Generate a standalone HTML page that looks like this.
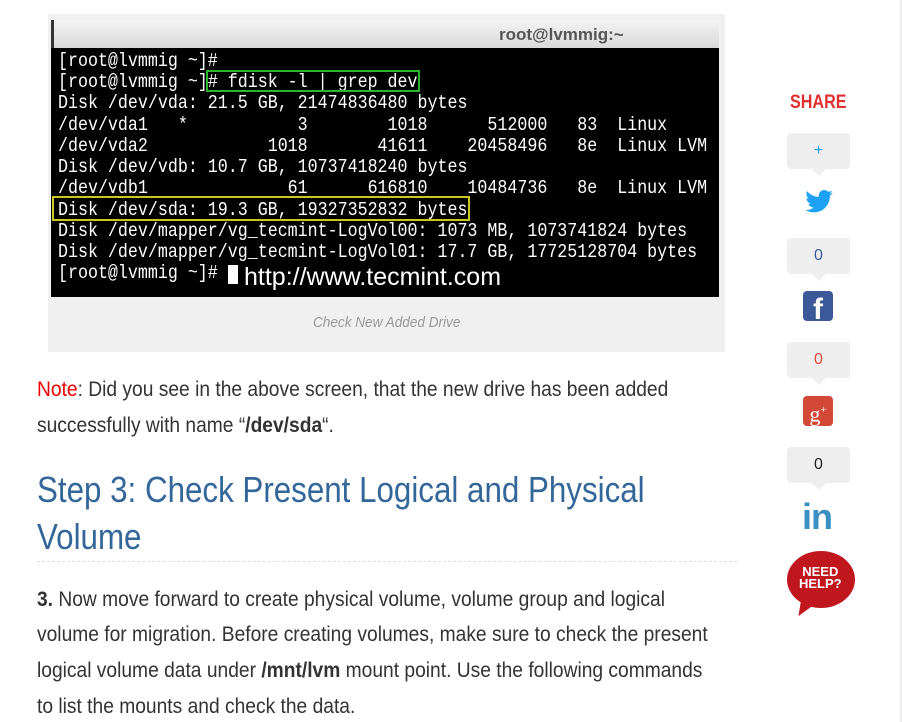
<!DOCTYPE html>
<html><head><meta charset="utf-8"><style>
body{margin:0;width:902px;height:722px;background:#fff;position:relative;overflow:hidden;font-family:"Liberation Sans",sans-serif}
.ab{position:absolute;white-space:nowrap}
.fig{position:absolute;left:48px;top:14px;width:677px;height:338px;background:#f0f0f0}
.term{position:absolute;left:51px;top:20px;width:668px;height:277px;background:#000}
.tbar{position:absolute;left:51px;top:20px;width:668px;height:28px;background:linear-gradient(#f3f3f3,#d9d9d9);border-left:3px solid #333;box-sizing:border-box}
.tl{position:absolute;left:58px;font-family:"Liberation Mono",monospace;font-size:16.65px;color:#fff;white-space:pre;transform:scaleY(1.15);transform-origin:left top}
.p{font-size:21px;color:#333;transform:scaleX(.915);transform-origin:left top}
.h{font-size:36px;color:#336699;transform:scaleX(.87);transform-origin:left top}
.box{position:absolute;background:#eee;border-radius:4px;width:63px;height:36px;left:787px;text-align:center;font-size:16px;line-height:36px}
.box:after{content:"";position:absolute;left:25px;bottom:-7px;border:7px solid transparent;border-top-color:#eee;border-bottom:0}
</style></head><body>
<div class="fig"></div>
<div class="term"></div>
<div class="tbar"></div>
<div class="ab" style="left:499px;top:25px;font-weight:bold;color:#555;font-size:17px">root@lvmmig:~</div>
<div class="tl" style="top:50px">[root@lvmmig ~]#</div>
<div class="tl" style="top:71px">[root@lvmmig ~]# fdisk -l | grep dev</div>
<div class="tl" style="top:92px">Disk /dev/vda: 21.5 GB, 21474836480 bytes</div>
<div class="tl" style="top:114px">/dev/vda1   *           3        1018      512000   83  Linux</div>
<div class="tl" style="top:135px">/dev/vda2            1018       41611    20458496   8e  Linux LVM</div>
<div class="tl" style="top:156px">Disk /dev/vdb: 10.7 GB, 10737418240 bytes</div>
<div class="tl" style="top:177px">/dev/vdb1              61      616810    10484736   8e  Linux LVM</div>
<div class="tl" style="top:199px">Disk /dev/sda: 19.3 GB, 19327352832 bytes</div>
<div class="tl" style="top:220px">Disk /dev/mapper/vg_tecmint-LogVol00: 1073 MB, 1073741824 bytes</div>
<div class="tl" style="top:241px">Disk /dev/mapper/vg_tecmint-LogVol01: 17.7 GB, 17725128704 bytes</div>
<div class="tl" style="top:262px">[root@lvmmig ~]#</div>
<div class="ab" style="left:228px;top:265px;width:10px;height:19px;background:#fff"></div>
<div class="ab" style="left:244px;top:263px;color:#fff;font-size:25px">http://www.tecmint.com</div>
<div class="ab" style="left:206px;top:70px;width:214px;height:22px;border:2px solid #2db52d;box-sizing:border-box"></div>
<div class="ab" style="left:52px;top:196px;width:418px;height:25px;border:2px solid #c8c81e;box-sizing:border-box"></div>
<div class="ab" style="left:313px;top:314px;color:#999;font-size:15px;font-style:italic;transform:scaleX(.905);transform-origin:left top">Check New Added Drive</div>

<div class="ab p" style="left:37px;top:378px"><span style="color:#e00">Note</span>: Did you see in the above screen, that the new drive has been added</div>
<div class="ab p" style="left:37px;top:414px">successfully with name “<b>/dev/sda</b>“.</div>
<div class="ab h" style="left:37px;top:469px">Step 3: Check Present Logical and Physical</div>
<div class="ab h" style="left:37px;top:516px">Volume</div>
<div class="ab" style="left:37px;top:561px;width:700px;border-top:1px dashed #ddd"></div>
<div class="ab p" style="left:37px;top:588px"><b>3.</b> Now move forward to create physical volume, volume group and logical</div>
<div class="ab p" style="left:37px;top:623px">volume for migration. Before creating volumes, make sure to check the present</div>
<div class="ab p" style="left:37px;top:659px">logical volume data under <b>/mnt/lvm</b> mount point. Use the following commands</div>
<div class="ab p" style="left:37px;top:695px">to list the mounts and check the data.</div>

<div class="ab" style="left:900px;top:0;width:2px;height:722px;background:#eee"></div>
<div class="ab" style="left:790px;top:92px;color:#e03030;font-weight:bold;font-size:19px;transform:scaleX(.85);transform-origin:left top">SHARE</div>
<div class="box" style="top:133px;color:#1da1f2">+</div>
<svg class="ab" style="left:803px;top:187px" width="32" height="30" viewBox="0 0 24 24"><path fill="#1da1f2" d="M23 4.6a9 9 0 0 1-2.6.7 4.6 4.6 0 0 0 2-2.5 9 9 0 0 1-2.9 1.1A4.5 4.5 0 0 0 11.8 8 12.8 12.8 0 0 1 2.5 3.3a4.5 4.5 0 0 0 1.4 6 4.5 4.5 0 0 1-2-.6 4.5 4.5 0 0 0 3.6 4.5 4.5 4.5 0 0 1-2 .1 4.5 4.5 0 0 0 4.2 3.1A9 9 0 0 1 1 18.3 12.8 12.8 0 0 0 7.9 20.3c8.3 0 12.8-6.9 12.8-12.8v-.6A9 9 0 0 0 23 4.6z"/></svg>
<div class="box" style="top:238px;color:#3b5998">0</div>
<div class="ab" style="left:803px;top:291px;width:30px;height:30px;background:#3b5998;border-radius:4px;overflow:hidden"><span style="position:absolute;left:10px;top:2px;color:#fff;font-weight:bold;font-size:30px">f</span></div>
<div class="box" style="top:342px;color:#dd4b39">0</div>
<div class="ab" style="left:803px;top:396px;width:30px;height:30px;background:#d34836;border-radius:4px;color:#fff;font-family:'Liberation Serif',serif;font-size:22px;text-align:center;line-height:28px">g<sup style="font-size:11px">+</sup></div>
<div class="box" style="top:447px;color:#222">0</div>
<div class="ab" style="left:802px;top:496px;color:#3a8fc3;font-weight:bold;font-size:36px;letter-spacing:-1px">in</div>
<div class="ab" style="left:787px;top:551px;width:68px;height:57px;border-radius:50%;background:#c0171f"></div>
<div class="ab" style="left:797px;top:600px;width:0;height:0;border-left:5px solid transparent;border-right:10px solid transparent;border-top:18px solid #c0171f;transform:rotate(25deg)"></div>
<div class="ab" style="left:799px;top:566px;color:#fff;font-weight:bold;font-size:13px;line-height:12px;text-align:center">NEED<br>HELP?</div>
</body></html>
